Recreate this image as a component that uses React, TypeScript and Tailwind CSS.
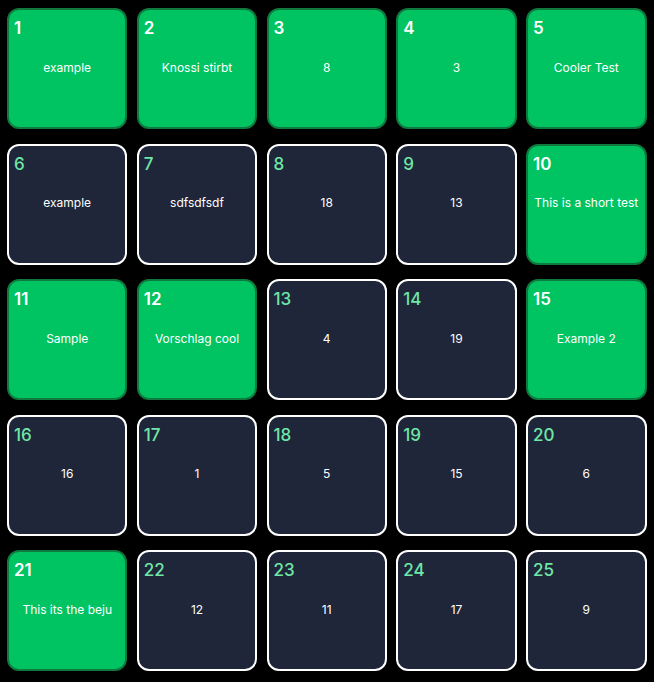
import React from 'react';

type Field = {
  id: number;
  text: string;
  done: boolean;
};

const fields: Field[] = [
  { id: 1, text: 'example', done: true },
  { id: 2, text: 'Knossi stirbt', done: true },
  { id: 3, text: '8', done: true },
  { id: 4, text: '3', done: true },
  { id: 5, text: 'Cooler Test', done: true },
  { id: 6, text: 'example', done: false },
  { id: 7, text: 'sdfsdfsdf', done: false },
  { id: 8, text: '18', done: false },
  { id: 9, text: '13', done: false },
  { id: 10, text: 'This is a short test', done: true },
  { id: 11, text: 'Sample', done: true },
  { id: 12, text: 'Vorschlag cool', done: true },
  { id: 13, text: '4', done: false },
  { id: 14, text: '19', done: false },
  { id: 15, text: 'Example 2', done: true },
  { id: 16, text: '16', done: false },
  { id: 17, text: '1', done: false },
  { id: 18, text: '5', done: false },
  { id: 19, text: '15', done: false },
  { id: 20, text: '6', done: false },
  { id: 21, text: 'This its the beju', done: true },
  { id: 22, text: '12', done: false },
  { id: 23, text: '11', done: false },
  { id: 24, text: '17', done: false },
  { id: 25, text: '9', done: false },
];

const BingoCell: React.FC<{ field: Field }> = ({ field }) => {
  return (
    <div
      className={
        field.done
          ? 'relative h-[121px] rounded-xl border-2 border-[#0f7a3e] bg-[#00c462] flex items-center justify-center'
          : 'relative h-[121px] rounded-xl border-2 border-white bg-[#1f2639] flex items-center justify-center'
      }
    >
      <span
        className={
          field.done
            ? 'absolute left-[5px] top-[4px] text-[17px] leading-7 font-semibold text-white'
            : 'absolute left-[5px] top-[4px] text-[17px] leading-7 font-medium text-[#6ee7a7]'
        }
      >
        {field.id}
      </span>
      <span className="-mt-0.5 whitespace-nowrap text-center text-xs font-normal text-white">{field.text}</span>
    </div>
  );
};

const App: React.FC = () => {
  return (
    <div className="min-h-screen bg-black pl-[7px] pr-[7.5px] pt-2 font-['Inter',sans-serif]">
      <div className="grid grid-cols-5 gap-x-[9.3px] gap-y-[14.6px]">
        {fields.map((field) => (
          <BingoCell key={field.id} field={field} />
        ))}
      </div>
    </div>
  );
};

export default App;
